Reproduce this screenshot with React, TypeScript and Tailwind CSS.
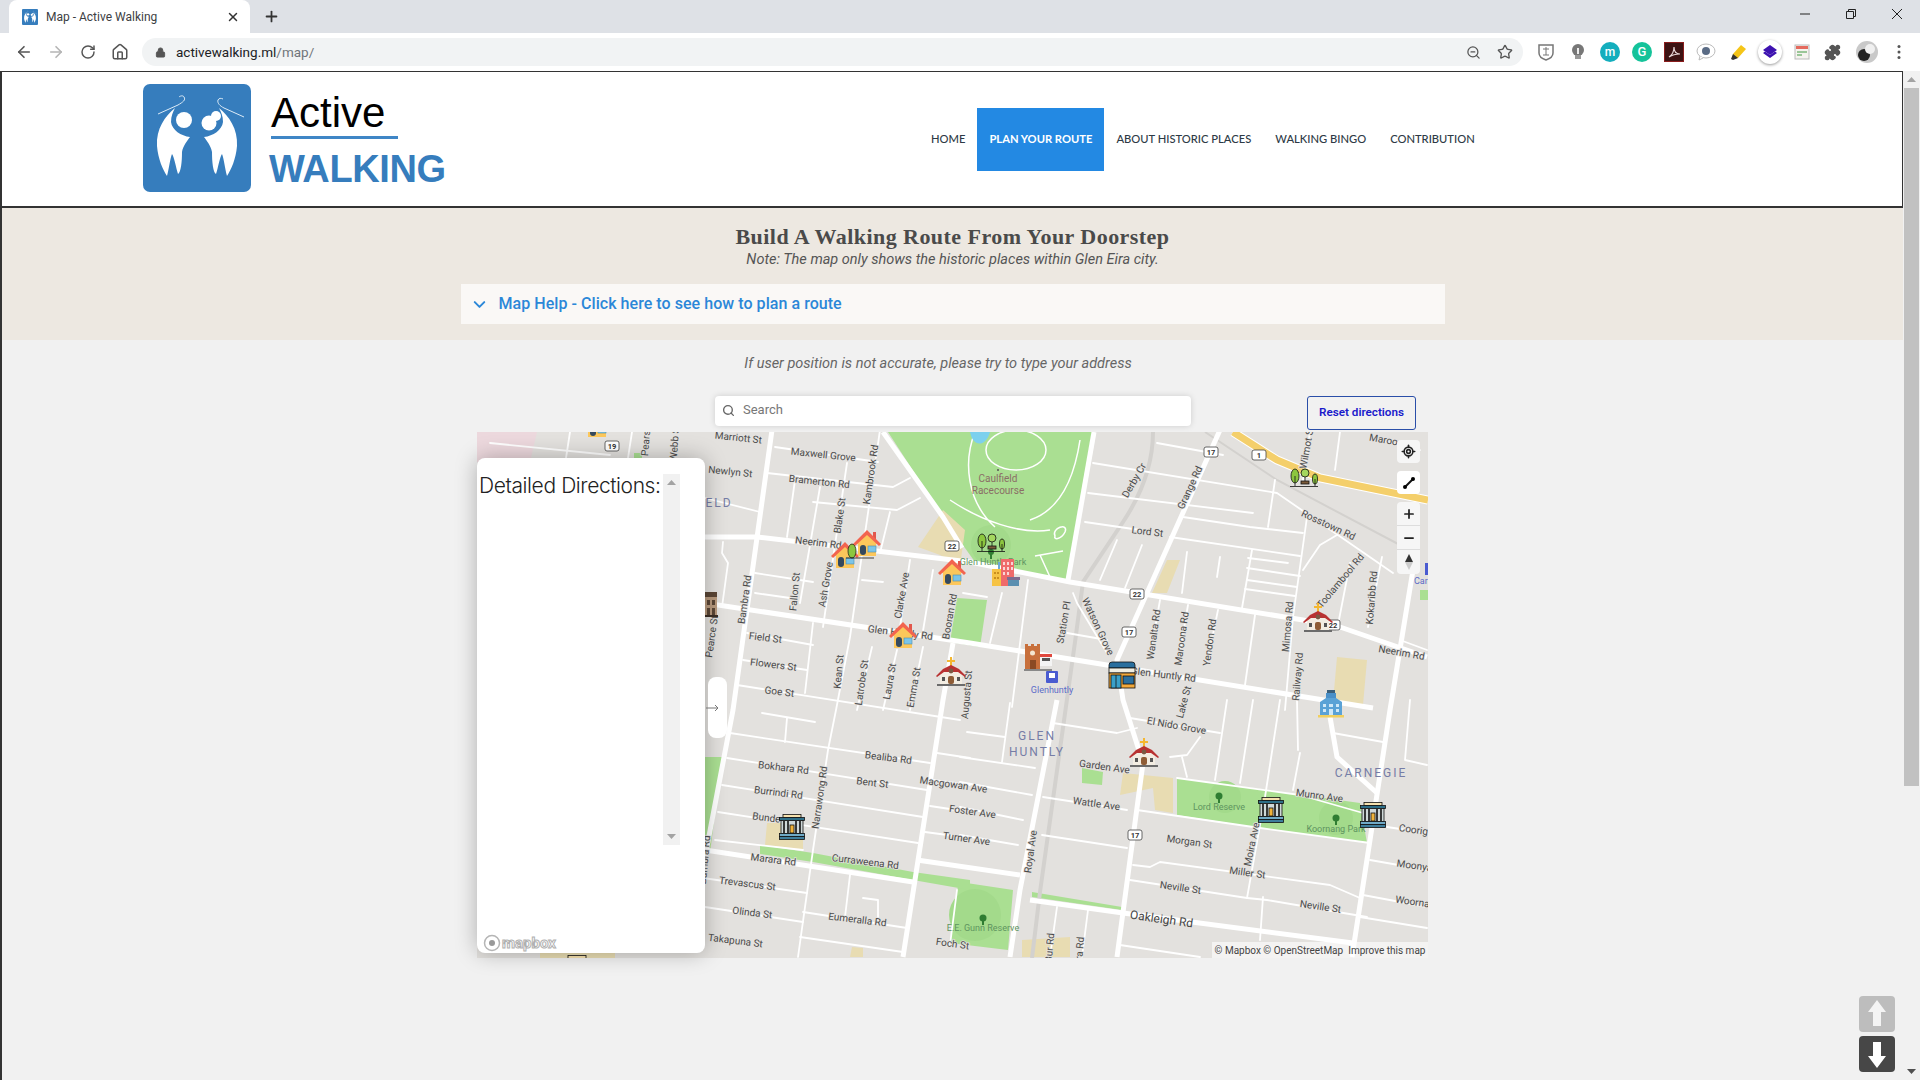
import { ArrowLeft, ArrowRight, RotateCw, Home, Lock, ZoomOut, Star, Plus, X, Search, ChevronDown, LocateFixed, Minus, Puzzle } from 'lucide-react';

type Label = [string, number, number, number];

// roads are [x1, y1, x2, y2 ...] in page coordinates
const wideRoads: number[][] = [
  [705, 537, 757, 537, 970, 562, 1070, 582, 1303, 620, 1340, 627, 1427, 657],
  [705, 603, 970, 643, 1107, 665, 1373, 708],
  [705, 850, 913, 882],
  [917, 860, 1020, 875],
  [1030, 900, 1123, 913, 1353, 943],
  [772, 430, 733, 710, 705, 857],
  [953, 643, 943, 700, 903, 957],
  [1220, 430, 1117, 660, 1123, 700, 1143, 763, 1117, 957],
  [1057, 700, 1020, 890, 1010, 957],
  [1413, 570, 1390, 710, 1352, 957],
  [1330, 717, 1337, 757, 1377, 793],
  [883, 432, 943, 517, 962, 548],
  [1094, 432, 1068, 580],
];

const streets: number[][] = [
  [490, 443, 610, 455], [570, 432, 566, 458], [632, 432, 628, 458],
  [775, 447, 878, 462], [767, 473, 893, 487, 910, 478], [705, 498, 760, 512], [813, 502, 897, 510, 920, 498],
  [795, 480, 787, 537], [820, 487, 800, 603], [847, 463, 823, 627], [890, 512, 880, 553], [910, 560, 900, 627],
  [933, 570, 922, 637], [723, 542, 722, 553, 728, 563, 722, 607], [755, 573, 813, 582], [755, 593, 790, 598],
  [862, 580, 883, 582], [747, 633, 813, 645], [813, 623, 805, 693], [743, 660, 807, 670], [737, 685, 960, 720],
  [880, 430, 850, 637, 836, 710, 828, 750, 813, 850, 798, 957], [872, 647, 857, 710], [897, 650, 883, 710],
  [923, 647, 910, 710], [730, 733, 930, 763], [727, 758, 927, 790], [722, 785, 923, 817], [718, 812, 918, 843],
  [715, 840, 803, 850], [703, 878, 807, 893], [705, 907, 803, 922], [803, 912, 907, 928], [800, 937, 903, 952],
  [762, 713, 815, 722], [787, 718, 785, 742], [863, 898, 878, 900, 878, 920], [850, 875, 845, 917],
  [937, 753, 970, 758], [933, 780, 970, 785], [930, 806, 970, 812], [925, 832, 970, 838], [957, 890, 950, 945],
  [960, 757, 1035, 768], [967, 732, 1005, 737], [1010, 703, 1002, 762], [960, 782, 1032, 795], [960, 807, 1023, 820],
  [960, 835, 1018, 845], [1042, 835, 1127, 848], [1043, 797, 1127, 810], [1053, 723, 1117, 733, 1137, 728],
  [1130, 718, 1220, 733], [1137, 810, 1260, 828, 1370, 843], [1177, 778, 1300, 795, 1370, 815],
  [1133, 865, 1150, 867, 1160, 862, 1330, 885, 1360, 898], [1130, 880, 1247, 898], [1247, 898, 1267, 900, 1367, 917],
  [1370, 860, 1427, 870], [1363, 895, 1427, 907], [1360, 917, 1427, 928], [1387, 827, 1427, 833],
  [1227, 700, 1215, 780], [1253, 700, 1240, 783], [1280, 700, 1265, 797, 1247, 898], [1297, 700, 1298, 750],
  [1300, 753, 1293, 790], [1410, 700, 1405, 760, 1427, 765], [1333, 733, 1383, 742],
  [1170, 757, 1187, 755, 1200, 737], [1182, 757, 1187, 777], [1263, 897, 1260, 940], [1120, 945, 1200, 957],
  [1057, 907, 1050, 957], [1088, 910, 1082, 957], [1157, 443, 1223, 455], [1093, 463, 1277, 493, 1393, 573],
  [1088, 493, 1253, 513], [1085, 522, 1140, 530], [1183, 517, 1250, 527, 1303, 533], [1170, 537, 1300, 556],
  [1275, 480, 1268, 527], [1307, 517, 1293, 617, 1285, 710], [1117, 540, 1100, 580], [1142, 545, 1125, 588],
  [1252, 550, 1242, 608], [1248, 558, 1288, 563], [1247, 568, 1300, 576], [1247, 580, 1297, 587], [1245, 589, 1295, 596],
  [1187, 552, 1182, 593], [1220, 557, 1217, 577], [1303, 570, 1320, 545, 1337, 535], [1350, 563, 1337, 630],
  [1382, 557, 1368, 627], [1160, 600, 1150, 657], [1188, 605, 1178, 663], [1218, 610, 1207, 663], [1255, 615, 1245, 685],
  [1028, 580, 1012, 707], [1002, 593, 990, 643], [1073, 593, 1077, 603, 1107, 653], [963, 593, 987, 597],
  [1067, 633, 1107, 640], [1400, 640, 1427, 650], [1380, 440, 1420, 450], [1310, 432, 1303, 480], [1340, 432, 1335, 470],
];

const labels: Label[] = [
  ['Marriott St', 738, 441, 6], ['Maxwell Grove', 823, 458, 6], ['Newlyn St', 730, 475, 6], ['Bramerton Rd', 819, 485, 6],
  ['Kambrook Rd', 874, 475, -82], ['Blake St', 843, 516, -82], ['Neerim Rd', 818, 546, 7], ['Ash Grove', 829, 585, -80],
  ['Bambra Rd', 748, 600, -82], ['Fallon St', 798, 592, -85], ['Clarke Ave', 905, 596, -80], ['Booran Rd', 953, 617, -80],
  ['Glen Huntly Rd', 900, 636, 7], ['Pearce St', 715, 637, -82], ['Field St', 765, 641, 7], ['Flowers St', 773, 668, 7],
  ['Goe St', 779, 695, 7], ['Kean St', 842, 672, -85], ['Latrobe St', 865, 683, -82], ['Laura St', 893, 682, -80],
  ['Emma St', 917, 688, -80], ['Webb St', 678, 443, -85], ['Pearson St', 650, 432, -85], ['Derby Cr', 1137, 482, -60],
  ['Grange Rd', 1193, 489, -65], ['Lord St', 1147, 535, 7], ['Rosstown Rd', 1327, 528, 25], ['Toolambool Rd', 1343, 583, -50],
  ['Kokaribb Rd', 1375, 598, -85], ['Station Pl', 1067, 623, -80], ['Watson Grove', 1095, 628, 65], ['Wanalta Rd', 1157, 635, -82],
  ['Maroona Rd', 1185, 639, -82], ['Yendon Rd', 1213, 643, -82], ['Mimosa Rd', 1291, 627, -85], ['Railway Rd', 1301, 677, -85],
  ['Neerim Rd', 1401, 656, 10], ['Glen Huntly Rd', 1163, 678, 7], ['Wilmot St', 1310, 448, -80], ['Maroo', 1383, 443, 10],
  ['Lake St', 1187, 703, -75], ['Augusta St', 970, 695, -85], ['Bealiba Rd', 888, 761, 7], ['Bokhara Rd', 783, 771, 7],
  ['Bent St', 872, 786, 7], ['Burrindi Rd', 778, 796, 7], ['Narrawong Rd', 823, 798, -82], ['Bunde', 766, 821, 7],
  ['Marara Rd', 773, 863, 7], ['Curraweena Rd', 865, 865, 7], ['Bambra Rd', 708, 860, -85], ['Trevascus St', 747, 887, 7],
  ['Olinda St', 752, 916, 7], ['Eumeralla Rd', 857, 923, 7], ['Takapuna St', 735, 944, 7], ['Macgowan Ave', 953, 788, 8],
  ['Foster Ave', 972, 815, 8], ['Turner Ave', 966, 842, 8], ['Foch St', 952, 947, 8], ['Royal Ave', 1034, 852, -82],
  ['El Nido Grove', 1176, 729, 10], ['Garden Ave', 1104, 770, 8], ['Wattle Ave', 1096, 807, 8], ['Morgan St', 1189, 845, 8],
  ['Munro Ave', 1319, 799, 8], ['Coorig', 1413, 833, 8], ['Moira Ave', 1255, 845, -78], ['Miller St', 1247, 876, 8],
  ['Neville St', 1180, 891, 8], ['Neville St', 1320, 910, 8], ['Moonya', 1414, 869, 8], ['Woorna', 1412, 905, 8],
  ['Bur Rd', 1053, 948, -85], ['Ira Rd', 1083, 950, -85],
];

const greens: string[] = [
  '888,432 1094,432 1068,580 975,562 945,520',
  '1177,778 1267,790 1360,803 1367,843 1260,828 1177,815',
  '957,598 987,600 980,647 950,642',
  '960,882 1013,890 1008,950 950,943 957,890',
  '760,845 813,853 913,872 970,880 970,890 913,880 813,862 760,854',
  '705,757 722,757 710,853 705,850',
  '1082,768 1103,772 1102,785 1082,783',
  '1032,892 1122,907 1122,910 1032,897',
  '1420,590 1428,590 1428,600 1420,600',
  '634,453 642,453 642,458 634,458',
];

const sands: string[] = [
  '1167,560 1180,560 1167,593 1152,593',
  '918,547 943,510 965,530 960,566 940,555',
  '1337,657 1367,660 1363,705 1333,702',
  '767,823 803,823 803,850 765,845',
  '1123,773 1173,778 1173,813 1155,810 1153,788 1120,795',
  '1022,940 1070,937 1070,957 1022,957',
  '852,947 863,948 863,957 850,957',
  '540,950 615,950 615,958 540,958',
];

const shields: [string, number, number][] = [
  ['19', 612, 446], ['22', 952, 546], ['17', 1211, 452], ['1', 1259, 455], ['22', 1137, 594], ['17', 1129, 632], ['22', 1333, 625], ['17', 1135, 835],
];

function pts(a: number[]) {
  const out: string[] = [];
  for (let i = 0; i < a.length; i += 2) out.push(a[i] + ',' + a[i + 1]);
  return out.join(' ');
}

function House({ x, y }: { x: number; y: number }) {
  return (
    <g transform={`translate(${x - 14} ${y - 14})`}>
      <rect x="20" y="3" width="3" height="7" fill="#e2574c" />
      <path d="M5 13h18v14H5z" fill="#fcc75b" />
      <path d="M14 4 25 15H3z" fill="#fcc75b" />
      <path d="M14 1 28 15l-2 2L14 6 2 17l-2-2z" fill="#f2644f" />
      <rect x="7" y="16" width="6" height="10" rx="3" fill="#34495e" />
      <rect x="15" y="17" width="8" height="6" fill="#7cc5e8" stroke="#4c8db0" strokeWidth="0.6" />
    </g>
  );
}

function Church({ x, y }: { x: number; y: number }) {
  return (
    <g transform={`translate(${x - 15} ${y - 15})`}>
      <path d="M14 0h2v3h3v2h-3v4h-2V5h-3V3h3z" fill="#f4b731" />
      <path d="M4 15h22v12H4z" fill="#f3ede2" />
      <path d="M0 19 7 12 15 8l8 4 7 7-1 1-7-5H8l-7 5z" fill="#b83232" />
      <circle cx="15" cy="14" r="2.4" fill="#7a5a44" />
      <rect x="12" y="19" width="6" height="8" rx="2" fill="#8e5c36" />
      <rect x="6" y="20" width="3" height="4" fill="#555" />
      <rect x="21" y="20" width="3" height="4" fill="#555" />
      <rect x="1" y="27" width="28" height="2" fill="#6b6b6b" />
    </g>
  );
}

function Museum({ x, y }: { x: number; y: number }) {
  return (
    <g transform={`translate(${x - 13} ${y - 13})`} stroke="#111" strokeWidth="0.8">
      <rect x="4" y="0.5" width="18" height="3" fill="#f5e1ae" />
      <rect x="0.5" y="3.5" width="25" height="3" fill="#2e6e87" />
      <rect x="2" y="6.5" width="22" height="13" fill="#cfd8d8" />
      <path d="M5 7v12M9 7v12M17 7v12M21 7v12" strokeWidth="1.6" />
      <rect x="11" y="11" width="4" height="8" fill="#f0b33a" />
      <rect x="0.5" y="19.5" width="25" height="3" fill="#6fa9c6" />
      <rect x="0.5" y="22.5" width="25" height="3" fill="#3d7d9c" />
    </g>
  );
}

function BrownHall({ x, y }: { x: number; y: number }) {
  return (
    <g transform={`translate(${x - 14} ${y - 14})`}>
      <rect x="2" y="2" width="24" height="5" fill="#5b4636" />
      <rect x="2" y="7" width="24" height="18" fill="#b89a7e" />
      <path d="M16 10h3v5h-3zM21 10h3v5h-3zM16 18h3v7h-3zM21 18h3v7h-3z" fill="#5b4636" />
      <rect x="1" y="25" width="26" height="2" fill="#3c2f26" />
    </g>
  );
}

function Park({ x, y }: { x: number; y: number }) {
  return (
    <g transform={`translate(${x - 14} ${y - 10})`} stroke="#111" strokeWidth="0.8">
      <ellipse cx="5" cy="9" rx="4" ry="7" fill="#8cc63f" />
      <path d="M5 9v10" />
      <circle cx="15" cy="6" r="4" fill="#a4d65e" />
      <path d="M15 10v5" />
      <rect x="11" y="14" width="8" height="3" fill="#7a5a3a" />
      <ellipse cx="25" cy="12" rx="2.5" ry="5" fill="#8cc63f" />
      <path d="M25 12v7M0 19.5h28" />
    </g>
  );
}

function Tower({ x, y }: { x: number; y: number }) {
  return (
    <g transform={`translate(${x - 13} ${y - 14})`}>
      <rect x="0" y="10" width="9" height="17" fill="#f6c344" />
      <rect x="9" y="0" width="13" height="27" fill="#ef6a6a" />
      <rect x="6" y="3" width="2" height="7" fill="#6aa9d8" />
      <path d="M11 3h2v3h-2zM15 3h2v3h-2zM19 3h2v3h-2zM11 8h2v3h-2zM15 8h2v3h-2zM19 8h2v3h-2zM11 13h2v3h-2zM15 13h2v3h-2z" fill="#fbd5d5" />
      <path d="M2 13h2v2H2zM5 13h2v2H5zM2 18h2v2H2zM5 18h2v2H5z" fill="#c98f1e" />
      <rect x="16" y="20" width="11" height="7" fill="#5b8fb0" />
      <rect x="15" y="18" width="13" height="3" fill="#7e6b8f" />
    </g>
  );
}

function OldPost({ x, y }: { x: number; y: number }) {
  return (
    <g transform={`translate(${x - 14} ${y - 14})`}>
      <path d="M1 1h3v2h3V1h3v2h3V1h3v26H1z" fill="#c8703c" />
      <circle cx="8.500" cy="10" r="2.500" fill="#f5e6d0" />
      <rect x="6" y="17" width="6" height="9" fill="#8a4a24" />
      <rect x="16" y="11" width="12" height="3" fill="#e0483e" />
      <rect x="16" y="14" width="12" height="9" fill="#f4f4f4" />
      <rect x="18" y="15" width="8" height="3" fill="#555" />
      <rect x="0" y="26" width="28" height="2" fill="#888" />
    </g>
  );
}

function PostOffice({ x, y }: { x: number; y: number }) {
  return (
    <g transform={`translate(${x - 14} ${y - 14})`} stroke="#111" strokeWidth="0.8">
      <path d="M1 4a3 3 0 0 1 3-3h20a3 3 0 0 1 3 3v3H1z" fill="#2a6f9e" />
      <rect x="1" y="7" width="26" height="5" fill="#f2efe2" />
      <rect x="1" y="12" width="26" height="15" fill="#f2a93c" />
      <rect x="3" y="14" width="10" height="13" fill="#3aa0c8" />
      <path d="M8 14v13" />
      <rect x="15" y="15" width="11" height="8" fill="#2a6f9e" />
    </g>
  );
}

function School({ x, y }: { x: number; y: number }) {
  return (
    <g transform={`translate(${x - 14} ${y - 14})`}>
      <rect x="10" y="0" width="8" height="3" fill="#3b5f7a" />
      <rect x="9" y="3" width="10" height="6" fill="#4a90c8" />
      <path d="M3 12 9 8h10l6 4v14H3z" fill="#5aa2d6" />
      <rect x="1" y="25" width="26" height="2.500" fill="#f1cf5e" />
      <path d="M6 14h3v3H6zM12 14h4v3h-4zM19 14h3v3h-3zM6 19h3v3H6zM12 19h4v6h-4zM19 19h3v3h-3z" fill="#cfe8f7" />
    </g>
  );
}

function LogoMark({ size }: { size: number }) {
  return (
    <svg width={size} height={size} viewBox="0 0 108 108" className="shrink-0">
      <rect width="108" height="108" rx="7" fill="#367dbd" />
      <g fill="#fff">
        <path d="M32 24C22 32 13 45 14 62c1 13 6 24 10 30 2-7 3-17 5-22 2 2 4 14 6 20 3-2 4-12 4-22 1-6 5-11 8-15-9-1-18-7-19-15 0-6 2-10 4-14z" />
        <circle cx="41" cy="36" r="8" />
        <path d="M76 24c10 8 19 21 18 38-1 13-6 24-10 30-2-7-3-17-5-22-2 2-4 14-6 20-3-2-4-12-4-22-1-6-5-11-8-15 9-1 18-7 19-15 0-6-2-10-4-14z" />
        <circle cx="66" cy="39" r="7.500" />
        <circle cx="73" cy="32" r="5" />
      </g>
      <g fill="none" stroke="#dcebf7" strokeWidth="1">
        <path d="M15 30 35 21c5-3 8-5 6-8-1-2-4-1-5 0" />
        <path d="M101 33 81 24c-4-2-7-5-6-8 1-2 3-2 5-1" />
      </g>
    </svg>
  );
}

function MapDrawing() {
  return (
    <svg viewBox="477 432 951 526" width="951" height="526" className="block font-[Roboto,sans-serif]">
      <rect x="477" y="432" width="951" height="526" fill="#e3e1de" />
      <path d="M477 432h60l-7 30h-53z" fill="#ecd8dd" />
      {greens.map((p, i) => <polygon key={i} points={p} fill="#aadf92" />)}
      {sands.map((p, i) => <polygon key={i} points={p} fill="#e8dcb2" />)}
      <circle cx="1225" cy="797" r="16" fill="#a3da8b" />
      <circle cx="1336" cy="818" r="17" fill="#a3da8b" />
      <circle cx="991" cy="545" r="20" fill="#a3da8b" />
      <circle cx="975" cy="915" r="26" fill="#a3da8b" />
      <g fill="none" stroke="#fff" strokeWidth="1.500">
        <ellipse cx="1016" cy="450" rx="30" ry="20" />
        <path d="M975 432c-12 30-8 70 20 95M1080 440c-6 40-20 70-50 80M950 500c30 20 70 35 100 30" />
        <path d="M1040 555l10 22M1035 556l28-5M1055 536c-4-8 14-14 10-4-4 8-12 8-10 4z" />
      </g>
      <path d="M970 432c2 10 8 14 14 10 4-3 5-7 6-10z" fill="#7cd0ee" />
      <path d="M1153 432c0 30-10 60-30 90l-40 60-8 60-35 250-8 66" fill="none" stroke="#d3d1ce" strokeWidth="4" />
      <path d="M1205 432 1277 480 1400 545" fill="none" stroke="#d3d1ce" strokeWidth="2" />
      <g fill="none" stroke="#fff" strokeWidth="1.800" strokeLinejoin="round" strokeLinecap="round">
        {streets.map((s, i) => <polyline key={i} points={pts(s)} />)}
      </g>
      <g fill="none" stroke="#fff" strokeWidth="5" strokeLinejoin="round">
        {wideRoads.map((s, i) => <polyline key={i} points={pts(s)} />)}
      </g>
      <polyline points="1233,432 1277,460 1320,478 1428,500" fill="none" stroke="#fff" strokeWidth="9" />
      <polyline points="1233,432 1277,460 1320,478 1428,500" fill="none" stroke="#f4cf6b" strokeWidth="7" />
      <g fontSize="10" fill="#4a4a4a" textAnchor="middle" stroke="#e3e1de" strokeWidth="1.500" style={{ paintOrder: 'stroke' }}>
        {labels.map(([t, x, y, r], i) => (
          <text key={i} x={x} y={y} transform={`rotate(${r} ${x} ${y})`}>{t}</text>
        ))}
      </g>
      <text x="1161" y="923" fontSize="12" fill="#444" textAnchor="middle" transform="rotate(8 1161 923)">Oakleigh Rd</text>
      <g fontSize="10" fill="#8a6e66" textAnchor="middle">
        <circle cx="998" cy="470" r="1" fill="#555" />
        <text x="998" y="482">Caulfield</text>
        <text x="998" y="494">Racecourse</text>
      </g>
      <g fontSize="9" fill="#5e9460" textAnchor="middle">
        <text x="993" y="565">Glen Huntly Park</text>
        <text x="1219" y="810">Lord Reserve</text>
        <text x="1336" y="832">Koornang Park</text>
        <text x="983" y="931">E.E. Gunn Reserve</text>
      </g>
      <g fill="#2f7d32">
        <circle cx="991" cy="552" r="3" /><circle cx="1219" cy="796" r="3.500" /><circle cx="1336" cy="818" r="3.500" /><circle cx="983" cy="918" r="3.500" />
        <path d="M990 554h2v5h-2zM1218 798h2v5h-2zM1335 820h2v5h-2zM982 920h2v5h-2z" />
      </g>
      <g fontSize="12" fill="#767da6" textAnchor="middle" letterSpacing="2">
        <text x="719" y="507">ELD</text>
        <text x="1037" y="740">GLEN</text>
        <text x="1037" y="756">HUNTLY</text>
        <text x="1371" y="777">CARNEGIE</text>
      </g>
      <rect x="1046" y="671" width="12" height="12" rx="1" fill="#4a5bd0" />
      <rect x="1049" y="673" width="6" height="5" fill="#fff" />
      <text x="1052" y="693" fontSize="9" fill="#5b6bc8" textAnchor="middle">Glenhuntly</text>
      <rect x="1425" y="563" width="3" height="12" fill="#4a5bd0" />
      <text x="1414" y="584" fontSize="9" fill="#5b6bc8">Car</text>
      {shields.map(([t, x, y], i) => (
        <g key={i}>
          <rect x={x - 7} y={y - 5} width="14" height="10" rx="2" fill="#fff" stroke="#444" strokeWidth="0.800" />
          <text x={x} y={y + 3} fontSize="7.500" fontWeight="700" fill="#333" textAnchor="middle">{t}</text>
        </g>
      ))}
      <House x={597} y={424} />
      <BrownHall x={705} y={604} />
      <Museum x={577} y={968} />
      <House x={845} y={555} />
      <House x={867} y={543} />
      <ellipse cx="852" cy="551" rx="4" ry="7" fill="#8cc63f" stroke="#111" strokeWidth="0.700" />
      <path d="M846 558h28" stroke="#111" strokeWidth="0.800" />
      <House x={952} y={572} />
      <House x={903} y={635} />
      <Church x={951} y={672} />
      <Park x={991} y={542} />
      <Tower x={1005} y={573} />
      <OldPost x={1038} y={657} />
      <PostOffice x={1122} y={675} />
      <Church x={1318} y={618} />
      <Park x={1304} y={477} />
      <School x={1331} y={704} />
      <Church x={1144} y={753} />
      <Museum x={1271} y={810} />
      <Museum x={1373} y={815} />
      <Museum x={792} y={827} />
    </svg>
  );
}

function MapControls() {
  const box = 'w-[23px] flex items-center justify-center bg-[#f6f6f6]';
  return (
    <div className="absolute top-[8px] left-[920px] flex flex-col gap-[8px]">
      <div className={`${box} h-[23px] rounded`}><LocateFixed size={15} strokeWidth={2.500} color="#222" /></div>
      <div className={`${box} h-[23px] rounded bg-white`}>
        <svg width="14" height="14" viewBox="0 0 14 14"><path d="M3 11 11 3" stroke="#111" strokeWidth="2" /><circle cx="3" cy="11" r="2" /><circle cx="11" cy="3" r="2" /></svg>
      </div>
      <div className="flex flex-col rounded overflow-hidden divide-y divide-[#ddd]">
        <div className={`${box} h-[24px]`}><Plus size={14} strokeWidth={3} color="#222" /></div>
        <div className={`${box} h-[24px]`}><Minus size={14} strokeWidth={3} color="#222" /></div>
        <div className={`${box} h-[24px]`}>
          <svg width="10" height="16" viewBox="0 0 10 16"><path d="M5 0 9 8H1z" fill="#333" /><path d="M5 16 9 8H1z" fill="#ccc" /></svg>
        </div>
      </div>
    </div>
  );
}

function DirectionsPanel() {
  return (
    <div className="absolute left-0 top-[26px] w-[228px] h-[495px] bg-white rounded-lg shadow-[0_0_22px_rgba(0,0,0,0.28)]">
      <div className="flex items-start pt-[16px] pl-[2px] h-[387px]">
        <h2 className="w-[184px] -mt-[4px] text-[21px] leading-[32px] text-[#222] whitespace-nowrap font-[Inter,sans-serif] font-light tracking-[-0.4px]">Detailed Directions:</h2>
        <div className="w-[17px] h-[371px] bg-[#f1f1f1] flex flex-col justify-between items-center py-[6px]">
          <svg width="9" height="5" viewBox="0 0 9 5"><path d="M4.500 0 9 5H0z" fill="#a3a3a3" /></svg>
          <svg width="9" height="5" viewBox="0 0 9 5"><path d="M4.500 5 9 0H0z" fill="#a3a3a3" /></svg>
        </div>
      </div>
      <div className="absolute bottom-[1px] left-[6px] flex items-center gap-[1px]">
        <svg width="18" height="18" viewBox="0 0 18 18"><circle cx="9" cy="9" r="7.500" fill="#fff" stroke="#b5b5b5" strokeWidth="1.500" /><circle cx="9" cy="9" r="3" fill="#999" /></svg>
        <span className="text-[15px] leading-none font-bold text-white [-webkit-text-stroke:1px_#b0b0b0] font-[Roboto,sans-serif]">mapbox</span>
      </div>
      {/* collapse tab sitting just outside the panel */}
      <div className="absolute left-[231px] top-[219px] w-[19px] h-[61px] bg-white rounded-lg" />
      <svg className="absolute left-[229px] top-[246px]" width="14" height="8" viewBox="0 0 14 8"><path d="M0 4h12M9 1l3 3-3 3" fill="none" stroke="#777" /></svg>
    </div>
  );
}

function BrowserChrome() {
  const iconBtn = 'w-[32px] flex justify-center';
  return (
    <>
      <div className="h-[33px] bg-[#dee1e6] flex items-end pl-[9px] shrink-0 relative">
        <div className="w-[241px] h-[33px] bg-white rounded-t-lg flex items-center pl-[13px] pr-[10px]">
          <LogoMark size={16} />
          <span className="ml-[8px] text-[12px] text-[#3c4043] flex-1">Map - Active Walking</span>
          <X size={14} color="#333" strokeWidth={2.500} />
        </div>
        <Plus size={17} color="#333" strokeWidth={2.500} className="ml-[13px] mb-[8px]" />
        <div className="ml-auto flex items-center h-full pb-[6px] gap-[32px] pr-[16px]">
          <svg width="14" height="14" viewBox="0 0 14 14"><path d="M2 7h10" stroke="#222" /></svg>
          <svg width="14" height="14" viewBox="0 0 14 14" fill="none" stroke="#222"><path d="M2.500 4.500h7v7h-7zM4.500 4.500v-2h7v7h-2" /></svg>
          <svg width="14" height="14" viewBox="0 0 14 14"><path d="M2 2l10 10M12 2 2 12" stroke="#222" /></svg>
        </div>
      </div>
      <div className="h-[38px] bg-white flex items-center pl-[8px] shrink-0">
        <div className={iconBtn}><ArrowLeft size={18} color="#555" strokeWidth={2.200} /></div>
        <div className={iconBtn}><ArrowRight size={18} color="#b5b5b5" strokeWidth={2.200} /></div>
        <div className={iconBtn}><RotateCw size={16} color="#555" strokeWidth={2.200} /></div>
        <div className={iconBtn}><Home size={18} color="#555" strokeWidth={2} /></div>
        <div className="ml-[6px] w-[1381px] h-[28px] bg-[#f1f3f4] rounded-full flex items-center pl-[13px] pr-[10px]">
          <Lock size={11} color="#555" fill="#555" />
          <span className="ml-[10px] text-[13.500px] text-[#202124]">activewalking.ml<span className="text-[#70757a]">/map/</span></span>
          <ZoomOut size={15} color="#555" className="ml-auto mr-[16px]" />
          <Star size={16} color="#555" />
        </div>
        <div className="flex items-center ml-[13px] gap-[12px]">
          <svg width="20" height="20" viewBox="0 0 20 20"><path d="M3 3h14v8c0 4-4 6-7 7-3-1-7-3-7-7z" fill="#fff" stroke="#777" strokeWidth="1.500" /><path d="M7 7h6M10 5v8M7 13h6" stroke="#777" /></svg>
          <svg width="20" height="20" viewBox="0 0 20 20"><circle cx="10" cy="8" r="6" fill="#777" /><rect x="7" y="13" width="6" height="4" fill="#999" /><rect x="9" y="6" width="2" height="6" fill="#eee" /></svg>
          <span className="w-[20px] h-[20px] rounded-full bg-[#14aebd] text-white text-[12px] flex items-center justify-center font-medium">m</span>
          <span className="w-[20px] h-[20px] rounded-full bg-[#15c39a] text-white text-[13px] flex items-center justify-center font-medium">G</span>
          <span className="w-[20px] h-[20px] bg-[#3d1212] border border-[#8a1c1c] flex items-center justify-center">
            <svg width="14" height="14" viewBox="0 0 14 14"><path d="M2 12c3-2 5-6 5-10 0 4 2 7 6 7-4 0-8 1-11 3z" fill="none" stroke="#e6d5d5" strokeWidth="1.200" /></svg>
          </span>
          <svg width="20" height="20" viewBox="0 0 20 20"><ellipse cx="10" cy="9" rx="9" ry="7" fill="#fff" stroke="#bbb" /><circle cx="10" cy="9" r="4" fill="#5a6b85" /><path d="M4 14l-1 4 4-2" fill="#fff" stroke="#bbb" /></svg>
          <svg width="20" height="20" viewBox="0 0 20 20"><path d="M5 12 13 3l5 4-8 9-6 1z" fill="#f5c518" /><path d="M3 17l2-5 5 4-5 2z" fill="#333" /></svg>
          <span className="w-[24px] h-[24px] rounded-full bg-white shadow-[0_1px_3px_rgba(0,0,0,0.4)] flex items-center justify-center -mx-[2px]">
            <svg width="16" height="16" viewBox="0 0 16 16"><path d="M8 1l7 5-7 5-7-5z" fill="#3d12b0" /><path d="M1 9l7 5 7-5-2-1.500-5 3.500-5-3.500z" fill="#3d12b0" /></svg>
          </span>
          <svg width="20" height="20" viewBox="0 0 20 20"><rect x="3" y="3" width="14" height="14" fill="#f5f3ef" stroke="#bbb" /><rect x="4" y="4" width="12" height="3" fill="#e56a5e" /><path d="M5 10h10M5 13h5" stroke="#7cb87c" strokeWidth="1.500" /></svg>
          <Puzzle size={17} color="#555" fill="#555" />
          <svg className="ml-[2px]" width="24" height="24" viewBox="0 0 24 24"><circle cx="12" cy="12" r="11" fill="#c9c9c9" /><circle cx="9" cy="15" r="6" fill="#222" /><circle cx="15" cy="9" r="5" fill="#f0f0f0" /></svg>
          <svg className="ml-[5px]" width="6" height="16" viewBox="0 0 6 16" fill="#555"><circle cx="3" cy="2.500" r="1.500" /><circle cx="3" cy="8" r="1.500" /><circle cx="3" cy="13.500" r="1.500" /></svg>
        </div>
      </div>
    </>
  );
}

export default function App() {
  const navItem = 'px-[12px] text-[11.200px] font-medium text-[#2d3a45] whitespace-nowrap font-[Lato,sans-serif]';
  return (
    <div className="w-screen h-screen overflow-hidden flex flex-col bg-[#f1f1f1] font-[Roboto,sans-serif]">
      <BrowserChrome />
      <div className="flex-1 min-h-0 flex relative">
        <main className="w-[1903px] border-l-2 border-t border-[#333] bg-[#f1f1f1]">
          <header className="h-[136px] bg-white border-b-2 border-r border-[#333] flex items-center pl-[141px]">
            <div className="-mt-[2px]"><LogoMark size={108} /></div>
            <div className="ml-[20px] w-[178px] flex flex-col">
              <span className="mt-[2px] text-[42px] leading-[42px] text-black font-[Liberation_Sans,sans-serif]">Active</span>
              <span className="h-[3px] w-[127px] bg-[#3f86c6] mt-[2px]" />
              <span className="mt-[11px] -ml-[2px] text-[38px] leading-[38px] font-bold text-[#367dbd] tracking-[-0.4px] font-[Liberation_Sans,sans-serif]">WALKING</span>
            </div>
            <nav className="ml-[470px] flex items-center h-[63px]">
              <a className={navItem}>HOME</a>
              <a className="h-full flex items-center px-[12px] bg-[#2389e3] text-white text-[11.200px] font-bold whitespace-nowrap font-[Lato,sans-serif]">PLAN YOUR ROUTE</a>
              <a className={navItem}>ABOUT HISTORIC PLACES</a>
              <a className={navItem}>WALKING BINGO</a>
              <a className={navItem}>CONTRIBUTION</a>
            </nav>
          </header>
          <section className="h-[132px] bg-[#ede8e1] flex flex-col items-center pt-[16px]">
            <h1 className="text-[22px] leading-[26px] font-bold text-[#4a4a4a] tracking-[0.45px] font-[Liberation_Serif,serif]">Build A Walking Route From Your Doorstep</h1>
            <p className="text-[14.500px] leading-[20px] italic text-[#555]">Note: The map only shows the historic places within Glen Eira city.</p>
            <div className="mt-[14px] w-[984px] h-[40px] bg-[#faf8f6] flex items-center pl-[9px]">
              <ChevronDown size={19} color="#2b87d8" strokeWidth={2.500} />
              <span className="ml-[10px] text-[16px] font-medium text-[#2b87d8] tracking-[0.05px]">Map Help - Click here to see how to plan a route</span>
            </div>
          </section>
          <p className="mt-[14px] pr-[29px] text-center text-[14.500px] leading-[20px] italic text-[#666]">If user position is not accurate, please try to type your address</p>
          <div className="mt-[22px] flex items-start ml-[713px]">
            <div className="w-[476px] h-[30px] bg-white rounded shadow-[0_0_6px_rgba(0,0,0,0.15)] flex items-center pl-[7px] pb-[2px]">
              <Search size={13} color="#666" strokeWidth={2.500} />
              <span className="ml-[8px] text-[13px] text-[#777]">Search</span>
            </div>
            <button className="ml-[116px] w-[109px] h-[34px] bg-transparent border border-[#2a4ea8] rounded-[3px] text-[11.700px] font-semibold text-[#1a1acb]">Reset directions</button>
          </div>
          <div className="relative ml-[475px] mt-[2px] w-[951px] h-[526px]">
            <MapDrawing />
            <MapControls />
            <DirectionsPanel />
            <div className="absolute right-0 bottom-0 w-[216px] h-[16px] bg-white/60 flex items-center justify-center gap-[5px] text-[10px] text-[#444] whitespace-nowrap">
              <span>© Mapbox © OpenStreetMap</span>
              <span>Improve this map</span>
            </div>
          </div>
        </main>
        <div className="w-[17px] bg-[#f1f1f1] flex flex-col items-center justify-between">
          <div className="w-full flex flex-col items-center">
            <svg className="my-[6px]" width="9" height="5" viewBox="0 0 9 5"><path d="M4.500 0 9 5H0z" fill="#a3a3a3" /></svg>
            <div className="w-[15px] h-[698px] bg-[#c1c1c1]" />
          </div>
          <svg className="mb-[6px]" width="9" height="5" viewBox="0 0 9 5"><path d="M4.500 5 9 0H0z" fill="#505050" /></svg>
        </div>
        <div className="absolute left-[1859px] top-[925px] flex flex-col gap-[4px]">
          <div className="w-[36px] h-[36px] rounded bg-[#bdbdbd] flex items-center justify-center">
            <svg width="20" height="28" viewBox="0 0 20 28"><path d="M10 0 19 12h-5v14H6V12H1z" fill="#f4f4f4" /></svg>
          </div>
          <div className="w-[36px] h-[36px] rounded bg-[#474747] flex items-center justify-center">
            <svg width="20" height="28" viewBox="0 0 20 28"><path d="M10 28 19 16h-5V2H6v14H1z" fill="#fff" /></svg>
          </div>
        </div>
      </div>
    </div>
  );
}
